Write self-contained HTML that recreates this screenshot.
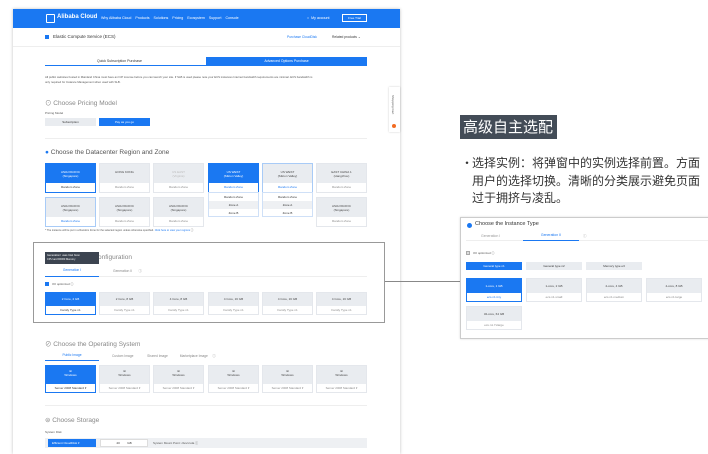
<!DOCTYPE html>
<html><head><meta charset="utf-8"><style>
*{margin:0;padding:0;box-sizing:border-box}
body{width:708px;height:454px;background:#fff;position:relative;overflow:hidden;font-family:"Liberation Sans","Noto Sans CJK SC",sans-serif;color:#333}
.a{position:absolute}
.t{font-size:3px;color:#555;white-space:nowrap}
.card{position:absolute;width:51px;background:#fff;border:1px solid #e4e7ec}
.card .top{background:#e9ecf0;height:19px;font-size:3px;color:#444;text-align:center;padding-top:6px;line-height:4px}
.card .bot{height:9px;font-size:3px;color:#888;text-align:center;line-height:9px}
.sel .top{background:#1a78f2;color:#fff}
.sel{border-color:#1a78f2}
.h{position:absolute;font-size:6.5px;color:#555;white-space:nowrap}
</style></head><body>
<div class="a" style="left:13px;top:9px;width:387px;height:445px;background:#fff;box-shadow:0 0 3px rgba(0,0,0,.25)"></div>
<div class="a" style="left:13px;top:9px;width:387px;height:19px;background:#1a78f2"></div>
<div class="a" style="left:46px;top:14px;width:9px;height:9px;border:1px solid #fff;border-radius:1px"></div>
<div class="a" style="left:57px;top:14px;font-size:6px;color:#fff;font-weight:bold;white-space:nowrap">Alibaba Cloud</div>
<div class="a" style="left:101px;top:16px;font-size:3.6px;color:#fff;white-space:nowrap">Why Alibaba Cloud &nbsp;&nbsp; Products &nbsp;&nbsp; Solutions &nbsp;&nbsp; Pricing &nbsp;&nbsp; Ecosystem &nbsp;&nbsp; Support &nbsp;&nbsp; Console</div>
<div class="a" style="left:307px;top:16px;font-size:3.6px;color:#fff;white-space:nowrap">○ &nbsp;My account</div>
<div class="a" style="left:342px;top:14px;width:25px;height:8px;border:1px solid #fff;font-size:3px;color:#fff;text-align:center;line-height:6px">Free Trial</div>
<div class="a" style="left:45px;top:35px;width:4px;height:4px;background:#1a78f2"></div>
<div class="a" style="left:53px;top:34px;font-size:4.5px;color:#333">Elastic Compute Service (ECS)</div>
<div class="a" style="left:287px;top:35px;font-size:3.3px;color:#1a78f2">Purchase CloudDisk</div>
<div class="a" style="left:332px;top:35px;font-size:3.3px;color:#333">Related products ⌄</div>
<div class="a" style="left:13px;top:46px;width:387px;height:1px;background:#eee"></div>
<div class="a" style="left:45px;top:57px;width:322px;height:9px;border-bottom:1px solid #1a78f2"></div>
<div class="a" style="left:97px;top:59px;font-size:3.5px">Quick Subscription Purchase</div>
<div class="a" style="left:206px;top:57px;width:161px;height:9px;background:#1a78f2;color:#fff;font-size:3.5px;text-align:center;line-height:9px">Advanced Options Purchase</div>
<div class="a t" style="left:45px;top:75px;font-size:2.8px;line-height:4.5px">All public websites hosted in Mainland China must have an ICP License before you can launch your site. If SLB is used please note your ECS instances Internet bandwidth requirements are minimal. ECS bandwidth is<br>only required for Instance Management when used with SLB.</div>
<div class="h" style="left:45px;top:97px;color:#888">⊙ Choose Pricing Model</div>
<div class="a t" style="left:45px;top:111px">Pricing Model</div>
<div class="a" style="left:45px;top:118px;width:51px;height:8px;background:#e9ecf0;font-size:3px;text-align:center;line-height:8px">Subscription</div>
<div class="a" style="left:99px;top:118px;width:51px;height:8px;background:#1a78f2;color:#fff;font-size:3px;text-align:center;line-height:8px">Pay as you go</div>
<div class="a" style="left:45px;top:138px;width:322px;height:1px;background:#eee"></div>
<div class="h" style="left:45px;top:149px"><span style="color:#1a78f2">●</span> Choose the Datacenter Region and Zone</div>
<div class="card sel" style="left:45px;top:163px"><div class="top">ASIA PACIFIC<br>(Singapore)</div><div class="bot" style="color:#333">Random Zone</div></div>
<div class="card" style="left:99px;top:163px"><div class="top">HONG KONG</div><div class="bot">Random Zone</div></div>
<div class="card" style="left:153px;top:163px"><div class="top" style="color:#bbb">US EAST<br>(Virginia)</div><div class="bot">Random Zone</div></div>
<div class="card sel" style="left:208px;top:163px"><div class="top">US WEST<br>(Silicon Valley)</div><div class="bot" style="color:#1a78f2">Random Zone</div></div>
<div class="card" style="left:262px;top:163px;border-color:#a8cbf7"><div class="top">US WEST<br>(Silicon Valley)</div><div class="bot" style="color:#1a78f2">Random Zone</div></div>
<div class="card" style="left:316px;top:163px"><div class="top">EAST CHINA 1<br>(Hangzhou)</div><div class="bot">Random Zone</div></div>
<div class="card" style="left:45px;top:197px;border-color:#a8cbf7"><div class="top">ASIA PACIFIC<br>(Singapore)</div><div class="bot" style="color:#1a78f2">Random Zone</div></div>
<div class="card" style="left:99px;top:197px"><div class="top">ASIA PACIFIC<br>(Singapore)</div><div class="bot">Random Zone</div></div>
<div class="card" style="left:153px;top:197px"><div class="top">ASIA PACIFIC<br>(Singapore)</div><div class="bot">Random Zone</div></div>
<div class="card" style="left:316px;top:197px"><div class="top">ASIA PACIFIC<br>(Singapore)</div><div class="bot">Random Zone</div></div>
<div class="a" style="left:208px;top:192px;width:51px;height:25px;background:#fff;border:1px solid #cfe0f7;font-size:3px;text-align:center;line-height:8px">Random Zone<br><span style="display:block;background:#eef0f3">Zone A</span>Zone B</div>
<div class="a" style="left:262px;top:192px;width:51px;height:25px;background:#fff;border:1px solid #cfe0f7;font-size:3px;text-align:center;line-height:8px">Random Zone<br><span style="display:block;background:#eef0f3">Zone A</span>Zone B</div>
<div class="a t" style="left:45px;top:228px;font-size:2.6px">* The instance will be put in a Random Zone for the selected region unless otherwise specified. <span style="color:#1a78f2">Click here to view your regions</span> ⓘ</div>
<div class="a" style="left:33px;top:242px;width:352px;height:81px;border:1px solid #999"></div>
<div class="a" style="left:385px;top:281px;width:75px;height:1px;background:#888"></div>
<div class="h" style="left:98px;top:254px;color:#888">onfiguration</div>
<div class="a" style="left:45px;top:252px;width:54px;height:12px;background:#3c4450;color:#fff;font-size:2.6px;line-height:3.5px;padding:2px">Generation I uses Intel Xeon<br>CPU and DDR3 Memory</div>
<div class="a" style="left:45px;top:268px;width:322px;height:9px;border-bottom:1px solid #eee"></div>
<div class="a" style="left:45px;top:268px;width:54px;height:9px;border-bottom:1px solid #1a78f2;font-size:3.3px;color:#1a78f2;text-align:center">Generation I</div>
<div class="a" style="left:113px;top:268px;font-size:3.3px;color:#888">Generation II &nbsp; &nbsp; &nbsp; ⓘ</div>
<div class="a" style="left:45px;top:282px;width:4px;height:4px;background:#1a78f2"></div>
<div class="a t" style="left:52px;top:282px">I/O optimized ⓘ</div>
<div class="card sel" style="left:45px;top:292px;height:23px"><div class="top" style="height:13px;padding-top:4px">2 Core, 4 GB</div><div class="bot" style="height:8px;line-height:8px;color:#333">Family Type n1</div></div>
<div class="card" style="left:99px;top:292px;height:23px"><div class="top" style="height:13px;padding-top:4px">2 Core, 8 GB</div><div class="bot" style="height:8px;line-height:8px">Family Type n1</div></div>
<div class="card" style="left:153px;top:292px;height:23px"><div class="top" style="height:13px;padding-top:4px">4 Core, 8 GB</div><div class="bot" style="height:8px;line-height:8px">Family Type n1</div></div>
<div class="card" style="left:208px;top:292px;height:23px"><div class="top" style="height:13px;padding-top:4px">4 Core, 16 GB</div><div class="bot" style="height:8px;line-height:8px">Family Type n1</div></div>
<div class="card" style="left:262px;top:292px;height:23px"><div class="top" style="height:13px;padding-top:4px">4 Core, 16 GB</div><div class="bot" style="height:8px;line-height:8px">Family Type n1</div></div>
<div class="card" style="left:316px;top:292px;height:23px"><div class="top" style="height:13px;padding-top:4px">4 Core, 16 GB</div><div class="bot" style="height:8px;line-height:8px">Family Type n1</div></div>
<div class="h" style="left:45px;top:338px;color:#888">⊘ Choose the Operating System</div>
<div class="a" style="left:45px;top:353px;width:54px;height:8px;border-bottom:1px solid #1a78f2;font-size:3.3px;color:#1a78f2;text-align:center">Public Image</div>
<div class="a" style="left:112px;top:353px;font-size:3.3px;color:#888;white-space:nowrap">Custom Image &nbsp; &nbsp; &nbsp; &nbsp; &nbsp; &nbsp; &nbsp; Shared Image &nbsp; &nbsp; &nbsp; &nbsp; &nbsp; &nbsp; Marketplace Image &nbsp; &nbsp; ⓘ</div>
<div class="card sel" style="left:45px;top:365px;height:28px"><div class="top" style="height:18px;padding-top:3px">⊞<br>Windows</div><div class="bot" style="color:#333">Server 2008 Standard ▾</div></div>
<div class="card" style="left:99px;top:365px;height:28px"><div class="top" style="height:18px;padding-top:3px">⊞<br>Windows</div><div class="bot">Server 2008 Standard ▾</div></div>
<div class="card" style="left:153px;top:365px;height:28px"><div class="top" style="height:18px;padding-top:3px">⊞<br>Windows</div><div class="bot">Server 2008 Standard ▾</div></div>
<div class="card" style="left:208px;top:365px;height:28px"><div class="top" style="height:18px;padding-top:3px">⊞<br>Windows</div><div class="bot">Server 2008 Standard ▾</div></div>
<div class="card" style="left:262px;top:365px;height:28px"><div class="top" style="height:18px;padding-top:3px">⊞<br>Windows</div><div class="bot">Server 2008 Standard ▾</div></div>
<div class="card" style="left:316px;top:365px;height:28px"><div class="top" style="height:18px;padding-top:3px">⊞<br>Windows</div><div class="bot">Server 2008 Standard ▾</div></div>
<div class="a" style="left:45px;top:405px;width:322px;height:1px;background:#eee"></div>
<div class="h" style="left:45px;top:416px;color:#888">⊜ Choose Storage</div>
<div class="a t" style="left:45px;top:430px">System Disk</div>
<div class="a" style="left:45px;top:438px;width:322px;height:10px;background:#eef0f3"></div>
<div class="a" style="left:48px;top:439px;width:48px;height:8px;background:#1a78f2;color:#fff;font-size:3px;line-height:8px;padding-left:4px">Efficient CloudDisk ▾</div>
<div class="a" style="left:100px;top:439px;width:48px;height:8px;background:#fff;border:1px solid #ddd;font-size:3px;line-height:7px;text-align:center">40 &nbsp; &nbsp; &nbsp; &nbsp; GB</div>
<div class="a t" style="left:153px;top:441px">System Mount Point: /dev/xvda ⓘ</div>
<div class="a" style="left:389px;top:87px;width:11px;height:45px;background:#fff;box-shadow:0 0 2px rgba(0,0,0,.2)"></div>
<div class="a" style="left:391px;top:95px;font-size:3px;color:#555;writing-mode:vertical-rl">Shopping Cart</div>
<div class="a" style="left:392px;top:124px;width:4px;height:4px;border-radius:50%;background:#f26b22"></div>
<div class="a" style="left:460px;top:115px;width:97px;height:24px;background:#434c57;color:#fff;font-size:15px;line-height:24px;padding-left:3px;white-space:nowrap;font-family:'Noto Sans CJK SC',sans-serif">高级自主选配</div>
<div class="a" style="left:460px;top:154px;width:248px;font-size:12px;line-height:17.5px;color:#333;font-family:'Noto Sans CJK SC',sans-serif;padding-left:12px"><span style="position:absolute;left:1px">•</span>选择实例：将弹窗中的实例选择前置。方面用户的选择切换。清晰的分类展示避免页面过于拥挤与凌乱。</div>
<div class="a" style="left:460px;top:217px;width:260px;height:122px;background:#fff;border:1px solid #ccc;box-shadow:0 0 2px rgba(0,0,0,.15)"></div>
<div class="a" style="left:467px;top:223px;width:5px;height:5px;border-radius:50%;background:#1a78f2"></div>
<div class="a" style="left:475px;top:221px;font-size:5.5px;color:#333">Choose the Instance Type</div>
<div class="a" style="left:466px;top:232px;width:242px;height:9px;border-bottom:1px solid #eee"></div>
<div class="a" style="left:481px;top:234px;font-size:3.5px;color:#999">Generation I</div>
<div class="a" style="left:523px;top:232px;width:56px;height:9px;border-bottom:1px solid #1a78f2;font-size:3.5px;color:#1a78f2;text-align:center;line-height:7px">Generation II</div>
<div class="a" style="left:583px;top:234px;font-size:3.5px;color:#999">ⓘ</div>
<div class="a" style="left:466px;top:251px;width:4px;height:4px;border:1px solid #aaa;background:#ddd"></div>
<div class="a t" style="left:473px;top:251px">I/O optimized ⓘ</div>
<div class="a" style="left:466px;top:262px;width:56px;height:8px;background:#1a78f2;color:#fff;font-size:3px;text-align:center;line-height:8px">General type n1</div>
<div class="a" style="left:526px;top:262px;width:56px;height:8px;background:#e9ecf0;font-size:3px;text-align:center;line-height:8px">General type n2</div>
<div class="a" style="left:586px;top:262px;width:56px;height:8px;background:#e9ecf0;font-size:3px;text-align:center;line-height:8px">Memory type e3</div>
<div class="card sel" style="left:466px;top:278px;width:56px;height:24px"><div class="top" style="height:14px;padding-top:5px">1-core, 1 GB</div><div class="bot" style="color:#1a78f2">ecs.n1.tiny</div></div>
<div class="card" style="left:526px;top:278px;width:56px;height:24px"><div class="top" style="height:14px;padding-top:5px">1-core, 2 GB</div><div class="bot">ecs.n1.small</div></div>
<div class="card" style="left:586px;top:278px;width:56px;height:24px"><div class="top" style="height:14px;padding-top:5px">2-core, 4 GB</div><div class="bot">ecs.n1.medium</div></div>
<div class="card" style="left:646px;top:278px;width:56px;height:24px"><div class="top" style="height:14px;padding-top:5px">4-core, 8 GB</div><div class="bot">ecs.n1.large</div></div>
<div class="card" style="left:466px;top:306px;width:56px;height:24px"><div class="top" style="height:14px;padding-top:5px">32-core, 64 GB</div><div class="bot">ecs.n1.7xlarge</div></div>
</body></html>
